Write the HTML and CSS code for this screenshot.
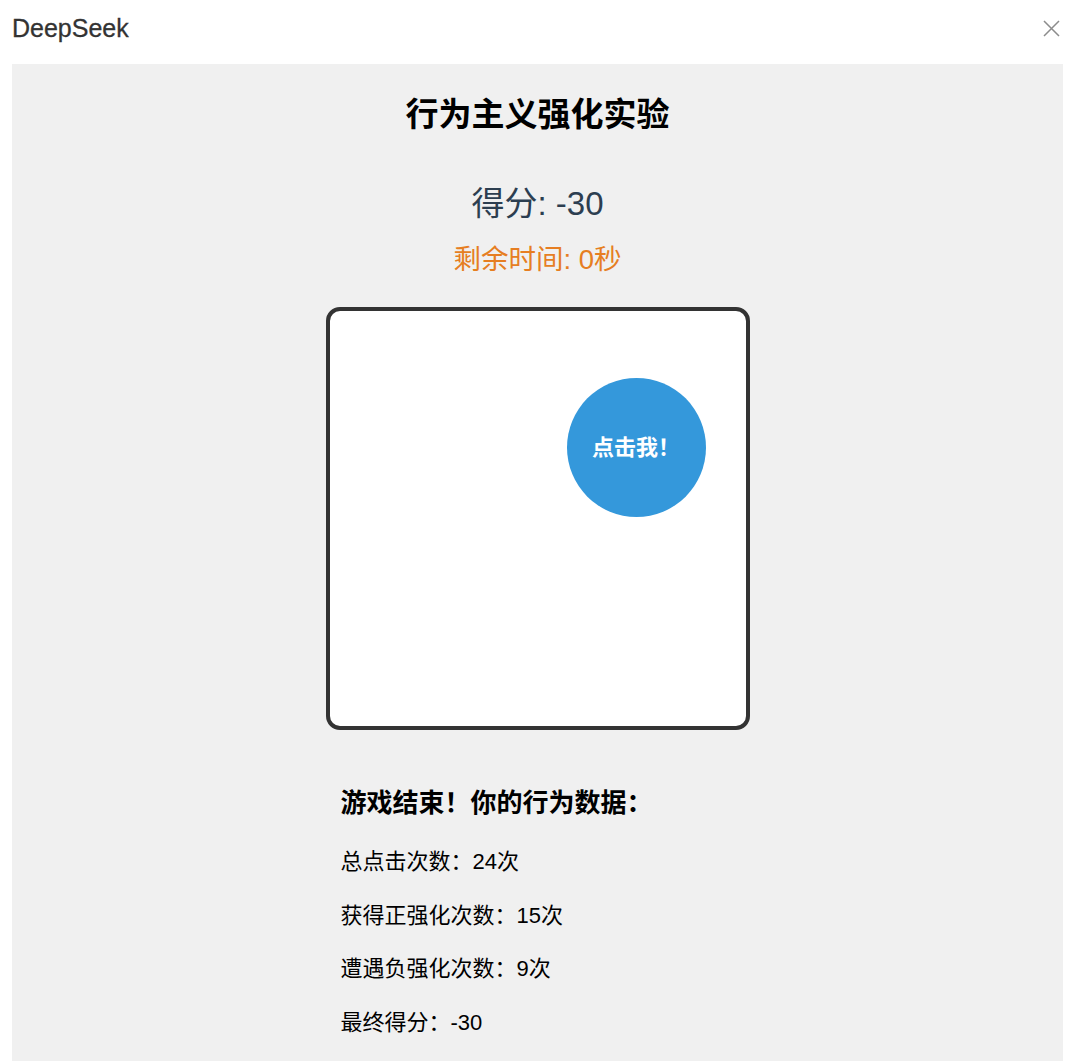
FILE: index.html
```html
<!DOCTYPE html>
<html lang="zh-CN">
<head>
    <meta charset="UTF-8">
    <meta name="viewport" content="width=device-width, initial-scale=1.0">
    <title>DeepSeek</title>
    <link rel="stylesheet" href="styles.css">
</head>
<body>
    <div class="topbar">
        <div class="brand">DeepSeek</div>
        <button class="close" aria-label="关闭">
            <svg width="17" height="17" viewBox="0 0 17 17">
                <path d="M1 1 L16 16 M16 1 L1 16" stroke="#8c8c8c" stroke-width="1.5" fill="none"/>
            </svg>
        </button>
    </div>

    <div class="panel">
        <h1 class="title">行为主义强化实验</h1>
        <div class="score">得分: -30</div>
        <div class="timer">剩余时间: 0秒</div>

        <div class="game_area">
            <button class="target">点击我！</button>
        </div>

        <div class="result">
            <h3>游戏结束！你的行为数据：</h3>
            <p>总点击次数：24次</p>
            <p>获得正强化次数：15次</p>
            <p>遭遇负强化次数：9次</p>
            <p>最终得分：-30</p>
        </div>
    </div>
</body>
</html>
```

FILE: styles.css
```css
body{
    margin: 0;
    background: #fff;
    font-family: "Liberation Sans", "Noto Sans CJK SC", sans-serif;
}

.topbar{
    height: 56px;
    display: flex;
    align-items: center;
    justify-content: space-between;
    padding: 0 20px 0 12px;
}

.brand{
    font-size: 25px;
    color: #333;
    -webkit-text-stroke: 0.3px #333;   /* 少しだけ太く見せる */
}

.close{
    background: none;
    border: none;
    padding: 0;
    display: flex;
}

.panel{
    margin: 8px 0 0 12px;
    width: 1051px;
    height: 997px;
    background: #f0f0f0;
    padding-top: 31px;
    box-sizing: border-box;
    display: flex;
    flex-direction: column;
    align-items: center;
}

.title{
    margin: 0;
    font-size: 33px;
    line-height: 40px;
    font-weight: bold;
    color: #000;
}

.score{
    margin-top: 49px;
    font-size: 33px;
    line-height: 40px;
    color: #2c3e50;
}

.timer{
    margin-top: 19px;
    font-size: 27.5px;
    line-height: 34px;
    color: #e67e22;
}

.game_area{
    position: relative;
    margin-top: 30px;
    width: 424px;
    height: 423px;
    box-sizing: border-box;
    border: 4px solid #333;
    border-radius: 14px;
    background: #fff;
}

/* ボタンはエリア内の自由な位置に置かれる */
.target{
    position: absolute;
    left: 237px;
    top: 67px;
    width: 139px;
    height: 139px;
    border-radius: 50%;
    border: none;
    background: #3498db;
    color: #fff;
    font-family: "Liberation Sans", "Noto Sans CJK SC", sans-serif;
    font-size: 22px;
    font-weight: bold;
    padding: 0 0 5px;
}

.result{
    width: 424px;
    margin-top: 57px;
    padding-left: 15px;
    box-sizing: border-box;
}

.result h3{
    margin: 0 0 28px;
    font-size: 26px;
    line-height: 32px;
    font-weight: bold;
    color: #000;
}

.result p{
    margin: 0 0 23.5px;
    font-size: 22px;
    line-height: 30px;
    color: #000;
}
```
